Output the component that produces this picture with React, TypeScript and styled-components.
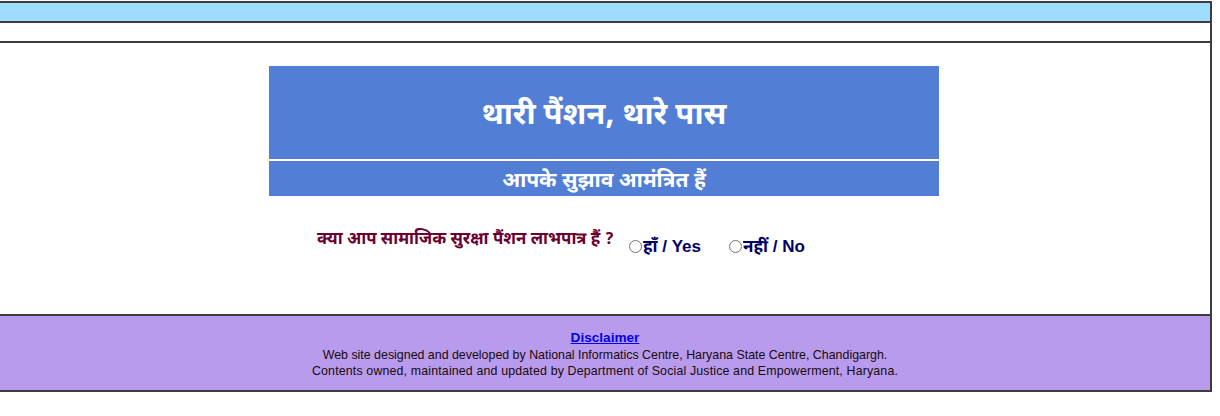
import styled, { createGlobalStyle } from "styled-components";

const GlobalStyle = createGlobalStyle`
  body {
    margin: 0;
    background: #ffffff;
    font-family: "Liberation Sans", Arial, sans-serif;
  }
`;

const Page = styled.div`
  width: 1210px;
  margin-top: 1px;
  border-right: 2px solid #3c3c3c;
`;

const Strip = styled.div<{ $bg: string }>`
  height: 18px;
  background: ${(p) => p.$bg};
  border-top: 2px solid #3c3c3c;
`;

const StripEnd = styled.div`
  border-top: 2px solid #3c3c3c;
`;

const Main = styled.main`
  height: 271px;
  padding-top: 23px;
  box-sizing: border-box;
  display: flex;
  flex-direction: column;
  align-items: center;
`;

const Banner = styled.div`
  width: 670px;
  margin-right: 2px;
  display: flex;
  flex-direction: column;
  gap: 2px;
  font-family: "Noto Sans Devanagari", "Noto Sans", "Liberation Sans", sans-serif;
  color: #ffffff;
  font-weight: 700;
  text-align: center;
`;

const Title = styled.div`
  height: 93px;
  box-sizing: border-box;
  padding-top: 8px;
  background: #527fd5;
  display: flex;
  align-items: center;
  justify-content: center;
  font-size: 31px;
`;

const Subtitle = styled.div`
  height: 35px;
  box-sizing: border-box;
  padding-top: 6px;
  background: #527fd5;
  display: flex;
  align-items: center;
  justify-content: center;
  font-size: 21px;
`;

const Question = styled.form`
  margin-top: 33px;
  margin-right: 88px;
  display: flex;
  align-items: flex-start;
  gap: 15px;
`;

const Prompt = styled.span`
  font-family: "Noto Sans Devanagari", "Noto Sans", "Liberation Sans", sans-serif;
  font-size: 16.8px;
  font-weight: 700;
  color: #6a0030;
`;

const Choice = styled.label`
  display: flex;
  align-items: center;
  margin-top: 8px;
  margin-right: 13px;
  font-family: "Liberation Sans", "Noto Sans Devanagari", Arial, sans-serif;
  font-size: 17px;
  font-weight: 700;
  color: #000066;

  &:last-child {
    margin-right: 0;
  }

  input {
    margin: 0 1px 3px 0;
    width: 13px;
    height: 13px;
  }
`;

const Footer = styled.footer`
  background: #b89bed;
  border-top: 2px solid #3c3c3c;
  border-bottom: 2px solid #3c3c3c;
  padding-top: 14px;
  height: 60px;
  text-align: center;
  font-size: 12.4px;
  line-height: 16.5px;
  color: #1a0a0a;
`;

const Disclaimer = styled.a`
  display: inline-block;
  font-size: 13.6px;
  font-weight: 700;
  color: #0000ee;
  text-decoration: underline;
`;

const WideLine = styled.div`
  letter-spacing: 0.15px;
`;

export default function App() {
  return (
    <>
      <GlobalStyle />
      <Page>
        <Strip $bg="#9fdcfd" />
        <Strip $bg="#ffffff" />
        <StripEnd />
        <Main>
          <Banner>
            <Title>थारी पैंशन, थारे पास</Title>
            <Subtitle>आपके सुझाव आमंत्रित हैं</Subtitle>
          </Banner>
          <Question>
            <Prompt>क्या आप सामाजिक सुरक्षा पैंशन लाभपात्र हैं ?</Prompt>
            <Choice>
              <input type="radio" name="eligible" />
              हाँ / Yes
            </Choice>
            <Choice>
              <input type="radio" name="eligible" />
              नहीं / No
            </Choice>
          </Question>
        </Main>
        <Footer>
          <Disclaimer href="#">Disclaimer</Disclaimer>
          <div>
            Web site designed and developed by National Informatics Centre, Haryana State Centre, Chandigargh.
          </div>
          <WideLine>
            Contents owned, maintained and updated by Department of Social Justice and Empowerment, Haryana.
          </WideLine>
        </Footer>
      </Page>
    </>
  );
}
